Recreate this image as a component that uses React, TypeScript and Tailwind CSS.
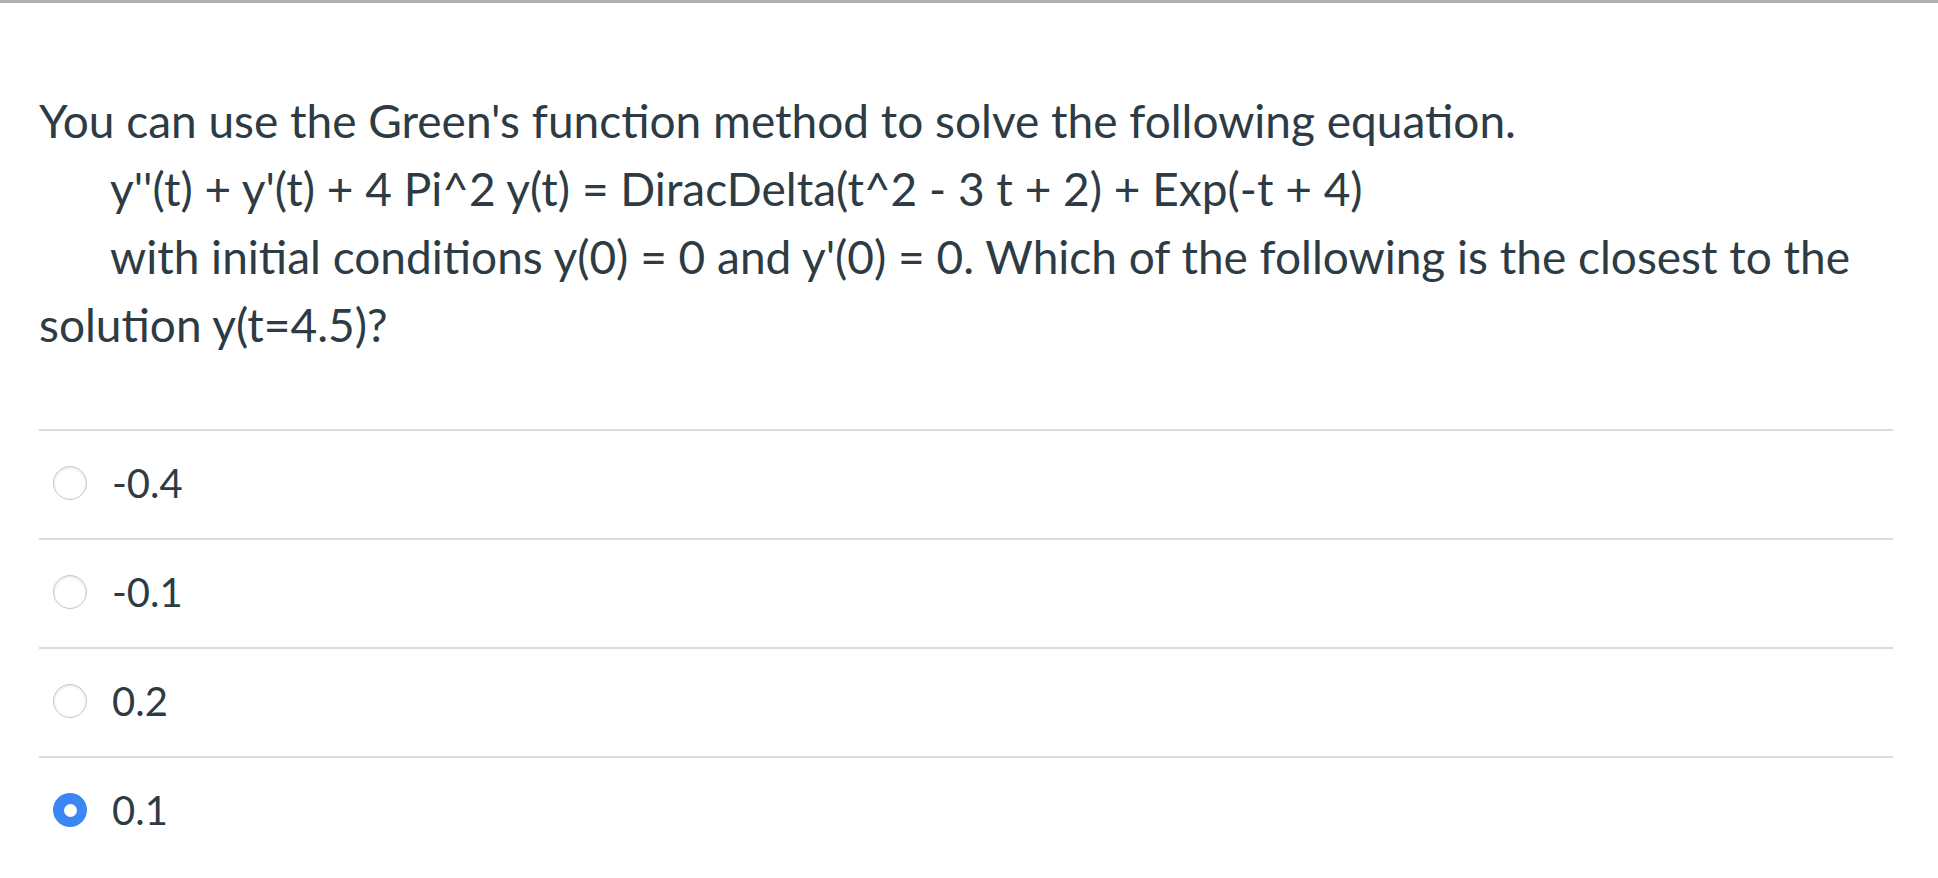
import React, { useState } from 'react';

const options = ['-0.4', '-0.1', '0.2', '0.1'];

const Radio: React.FC<{ checked: boolean }> = ({ checked }) =>
  checked ? (
    <span className="flex h-[34px] w-[34px] shrink-0 items-center justify-center rounded-full bg-[#3a86f5]">
      <span className="h-[13px] w-[13px] rounded-full bg-white" />
    </span>
  ) : (
    <span className="h-[34px] w-[34px] shrink-0 rounded-full border border-[#c6c6c6] bg-white shadow-[inset_0_1px_3px_rgba(0,0,0,0.12)]" />
  );

const App: React.FC = () => {
  const [selected, setSelected] = useState(3);

  return (
    <div className="min-h-[878px] bg-white border-t-[3px] border-[#b0b0b0] font-['Lato','Liberation_Sans',sans-serif] text-[#2d3b45]">
      {/* Question */}
      <div className="mx-[39px] pt-[84px] text-[46px] leading-[68px]">
        <p>You can use the Green's function method to solve the following equation.</p>
        <p className="indent-[71px]">y''(t) + y'(t) + 4 Pi^2 y(t) = DiracDelta(t^2 - 3 t + 2) + Exp(-t + 4)</p>
        <p className="indent-[71px]">
          with initial conditions y(0) = 0 and y'(0) = 0. Which of the following is the closest to the
          <br />
          solution y(t=4.5)?
        </p>
      </div>

      {/* Answers */}
      <div className="mx-[39px] mt-[70px] w-[1854px]">
        {options.map((opt, i) => (
          <label
            key={opt}
            onClick={() => setSelected(i)}
            className="flex h-[109px] cursor-pointer items-center border-t-2 border-[#dcdcdc] pb-[3px] pl-[14px]"
          >
            <Radio checked={selected === i} />
            <span className="ml-[25px] text-[40px] leading-none">{opt}</span>
          </label>
        ))}
      </div>
    </div>
  );
};

export default App;
